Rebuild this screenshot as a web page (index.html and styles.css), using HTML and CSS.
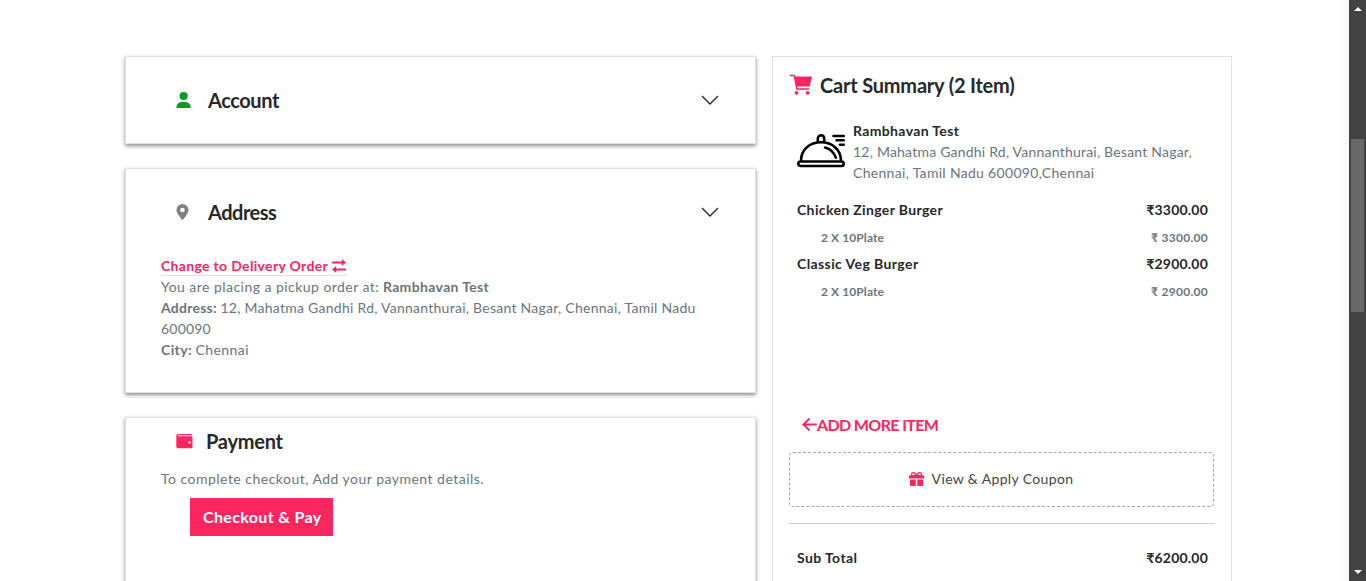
FILE: index.html
```html
<!DOCTYPE html>
<html lang="en">
<head>
<meta charset="utf-8">
<title>Checkout</title>
<link rel="stylesheet" href="styles.css">
</head>
<body>
<div class="viewport">
  <div class="page">
    <main class="steps">
      <section class="card account">
        <header class="card-head">
          <svg class="head-icon" width="16" height="18" viewBox="0 0 16 18"><g fill="#0a9d26"><circle cx="7.6" cy="5" r="4.1"/><path d="M.4 17c0-3.800 2.200-6 5.400-6h3.600c3.200 0 5.400 2.200 5.400 6z"/></g></svg>
          <h2 class="t-account">Account</h2>
          <svg class="chevron" width="18" height="11" viewBox="0 0 18 11"><path d="M1 1l8 8 8-8" fill="none" stroke="#212529" stroke-width="1.300"/></svg>
        </header>
      </section>
      <section class="card address">
        <header class="card-head">
          <svg class="head-icon" width="16" height="18" viewBox="0 0 16 18"><path fill="#808080" fill-rule="evenodd" d="M6.500 1a6 6 0 0 1 6 6c0 3-3.500 7.300-6 10C4 14.300.5 10 .5 7a6 6 0 0 1 6-6zm0 3.700a2.300 2.300 0 1 0 0 4.600 2.300 2.300 0 0 0 0-4.600z"/></svg>
          <h2 class="t-address">Address</h2>
          <svg class="chevron" width="18" height="11" viewBox="0 0 18 11"><path d="M1 1l8 8 8-8" fill="none" stroke="#212529" stroke-width="1.300"/></svg>
        </header>
        <div class="card-body">
          <a class="switch"><span class="t-switch">Change to Delivery Order</span><svg width="14" height="14" viewBox="0 0 14 14"><path d="M0 3.500h11M3 10.500h11" stroke="#fc265f" stroke-width="2"/><path fill="#fc265f" d="M9.800 0L14 3.500 9.800 7zM4.200 7L0 10.500 4.200 14z"/></svg></a>
          <p><span class="t-pickup">You are placing a pickup order at:</span> <b class="t-store">Rambhavan Test</b></p>
          <p><b class="t-label">Address:</b> <span class="t-street">12, Mahatma Gandhi Rd, Vannanthurai, Besant Nagar, Chennai, Tamil Nadu</span></p>
          <p class="t-zip">600090</p>
          <p><b class="t-city">City:</b> <span class="t-chennai">Chennai</span></p>
        </div>
      </section>
      <section class="card payment">
        <header class="pay-head">
          <svg width="17" height="15" viewBox="0 0 17 15"><path fill="#fc265f" fill-rule="evenodd" d="M2.500 0h12.200c.8 0 1.300.5 1.300 1.200H2.500c-.6 0-.6 1 0 1H15c1 0 1.500.6 1.500 1.500v9c0 1-.6 1.500-1.500 1.500H2.500C1 14.200.3 13.500.3 12V2.200C.3 1 1 0 2.500 0zM13.500 7.300a1.100 1.100 0 1 0 0 2.200 1.100 1.100 0 0 0 0-2.200z"/></svg>
          <h2 class="t-payment">Payment</h2>
        </header>
        <p class="pay-note t-note">To complete checkout, Add your payment details.</p>
        <button class="pay-btn"><span class="t-pay">Checkout &amp; Pay</span></button>
      </section>
    </main>
    <aside class="cart">
      <header class="cart-head">
        <svg width="24" height="22" viewBox="0 0 24 22"><path fill="#fc265f" d="M.8.7H5c.5 0 .8.300.9.800l.3 1H23l-2.300 10H8.100l.3 1.800h11.900v1.500H7.300L4.600 2.300H.8z"/><circle cx="7.500" cy="18.800" r="1.900" fill="#fc265f"/><circle cx="18.700" cy="18.800" r="1.900" fill="#fc265f"/></svg>
        <h2 class="t-cart">Cart Summary (2 Item)</h2>
      </header>
      <div class="store">
        <svg width="48" height="34" viewBox="0 0 48 34"><g fill="none" stroke="#000" stroke-width="2.600" stroke-linecap="round"><rect x="1.300" y="27.500" width="45.400" height="4.500" rx="2.250"/><path d="M4 27C4 15 13 8.300 24 8.300S44 15 44 27M20.800 8V5c0-5 6.400-5 6.400 0v3"/><path d="M28 13.500c5.500 1.500 9.300 5.500 10.800 10.200"/><path d="M36.500 2H46.700M39.500 6.300H46.700M43 10.800H46.700"/></g></svg>
        <div>
          <p class="dark t-name">Rambhavan Test</p>
          <p class="t-line1">12, Mahatma Gandhi Rd, Vannanthurai, Besant Nagar,</p>
          <p class="t-line2">Chennai, Tamil Nadu 600090,Chennai</p>
        </div>
      </div>
      <div class="items">
        <div class="row"><span class="t-item1">Chicken Zinger Burger</span><span class="t-price">₹3300.00</span></div>
        <div class="row sub"><span class="t-qty">2 X 10Plate</span><span class="t-subprice">₹ 3300.00</span></div>
        <div class="row"><span class="t-item2">Classic Veg Burger</span><span class="t-price">₹2900.00</span></div>
        <div class="row sub"><span class="t-qty">2 X 10Plate</span><span class="t-subprice">₹ 2900.00</span></div>
      </div>
      <a class="add-more"><svg width="15" height="13" viewBox="0 0 15 13"><path d="M7 1L1.300 6.500 7 12M1.500 6.500H14" fill="none" stroke="#fc265f" stroke-width="1.800" stroke-linecap="round"/></svg><span class="t-add">ADD MORE ITEM</span></a>
      <div class="coupon">
        <svg width="15" height="14" viewBox="0 0 15 14"><g fill="#fc265f"><path d="M.8 3.200h13.400c.5 0 .8.300.8.800v2.500H0V4c0-.5.300-.8.800-.8zM1 7.600h5.700V14H2c-.6 0-1-.4-1-1zM8.300 7.600H14V13c0 .6-.4 1-1 1H8.300z"/></g><path d="M7.500 3.700C6.500 1.500 5.500.7 4.300.7 2 .7 2 3.700 4 3.700h7c2 0 2-3-.3-3-1.200 0-2.200.8-3.200 3z" fill="none" stroke="#fc265f" stroke-width="1.300"/></svg>
        <span class="t-coupon">View &amp; Apply Coupon</span>
      </div>
      <div class="row total"><span class="t-subtotal">Sub Total</span><span class="t-price">₹6200.00</span></div>
    </aside>
  </div>
  <div class="scrollbar"><i class="up"></i><i class="thumb"></i><i class="down"></i></div>
</div>
</body>
</html>
```
FILE: styles.css
```css
* { box-sizing: border-box; }
body { margin: 0; height: 581px; overflow: hidden; background: #fff; color: #6c757d; font: 14px/21px Lato, "Noto Sans", sans-serif; }
h2, p { margin: 0; }
h2 { font-size: 20px; line-height: 24px; font-weight: 700; color: #26282b; }
svg { display: block; flex: none; }
span, b, h2, p { white-space: nowrap; }
b { font-weight: 700; }
.viewport { display: flex; height: 581px; overflow: hidden; }
.page { flex: 1; display: flex; align-items: flex-start; gap: 16px; padding: 56px 0 0 125px; background: linear-gradient(to left, #f8f8f8, #fff 12px); }
.steps { width: 631px; display: flex; flex-direction: column; gap: 24px; }
.card { border: 1px solid #dee2e6; background: #fff; box-shadow: 0 2px 4px rgba(0,0,0,.45); }
.account { height: 88px; }
.address { height: 225px; }
.payment { height: 240px; }
.card-head { display: flex; align-items: center; height: 86px; padding: 0 36px 0 50px; }
.head-icon { margin-right: 16px; }
.chevron { margin-left: auto; }
.card-body { padding-left: 35px; }
.switch { display: flex; align-items: center; gap: 4px; width: 186px; height: 20px; margin: 1px 0 0; border-bottom: 1px solid #dee2e6; color: #fc265f; font-weight: 700; }
.pay-head { display: flex; align-items: center; gap: 13px; padding: 11px 0 0 50px; }
.pay-note { margin: 15px 0 9px 35px; }
.pay-btn { display: block; width: 143px; height: 38px; margin-left: 64px; padding: 0 0 0 13px; border: 0; text-align: left; background: #fc265f; color: #fff; font: 700 16px/24px Lato, sans-serif; }
.cart { width: 460px; height: 560px; padding: 16px 16px 0; border: 1px solid #dee2e6; background: #fff; }
.cart-head { display: flex; align-items: center; gap: 7px; height: 24px; }
.store { display: flex; align-items: center; gap: 8px; margin: 23px 0 0 8px; height: 63px; }
.store svg { margin-top: -1px; }
.dark, .row { color: #26282b; font-weight: 700; }
.items { margin-top: 16px; }
.row { display: flex; justify-content: space-between; padding: 0 7px 0 8px; height: 27px; }
.sub { padding-left: 32px; font-size: 12px; line-height: 23px; color: #6c757d; }
.add-more { display: flex; align-items: center; height: 24px; margin: 105px 0 0 13px; color: #fc265f; font-size: 16px; font-weight: 700; }
.coupon { display: flex; align-items: center; justify-content: center; gap: 8px; width: 425px; height: 55px; margin-top: 16px; padding: 0 21px 2px 0; border: 1px dashed #a5a8ad; border-radius: 4px; color: #444; }
.total { margin-top: 16px; padding-top: 23px; width: 426px; height: 60px; border-top: 1px solid #ced0d2; }
.t-account { letter-spacing: -.42px; }
.t-address { letter-spacing: -.5px; }
.t-payment { letter-spacing: -.25px; }
.t-cart { letter-spacing: -.2px; }
.t-switch { letter-spacing: .33px; }
.t-pickup { letter-spacing: .46px; }
.t-store, .t-name, .t-pay, .t-item1, .t-coupon { letter-spacing: .36px; }
.t-label { letter-spacing: .25px; }
.t-street { letter-spacing: .26px; }
.t-zip { letter-spacing: .2px; }
.t-city, .t-chennai, .t-item2, .t-subtotal { letter-spacing: .4px; }
.t-note { letter-spacing: .48px; }
.t-line1 { letter-spacing: .22px; }
.t-line2 { letter-spacing: .31px; }
.t-price { letter-spacing: .2px; }
.t-qty { letter-spacing: .1px; }
.t-subprice { letter-spacing: .28px; }
.t-add { letter-spacing: -.62px; }
.scrollbar { position: relative; width: 17px; background: #424242; }
.scrollbar i { position: absolute; }
.thumb { left: 2px; top: 139px; width: 13px; height: 173px; background: #686868; }
.up, .down { left: 5px; border: 4px solid transparent; border-top-width: 0; border-bottom: 4px solid #fff; }
.up { top: 7px; }
.down { bottom: 7px; transform: rotate(180deg); }
```
